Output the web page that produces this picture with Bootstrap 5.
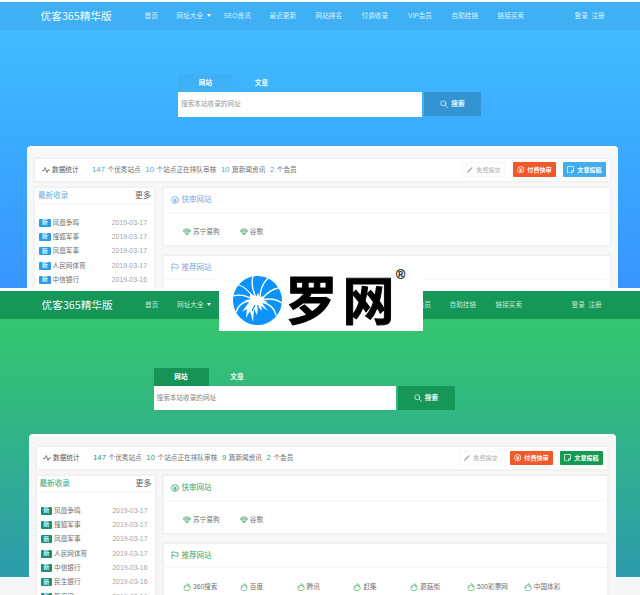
<!DOCTYPE html>
<html lang="zh-CN">
<head>
<meta charset="utf-8">
<meta name="viewport" content="width=device-width, initial-scale=1">
<title>优客365精华版</title>
<link href="https://cdn.jsdelivr.net/npm/bootstrap@5.3.0/dist/css/bootstrap.min.css" rel="stylesheet">
<style>
body{font-family:"Liberation Sans","Noto Sans CJK SC",sans-serif;font-size:6.65px;line-height:1.2;color:#707070;background:#fff;width:640px;height:595px;overflow:hidden}
svg{display:block;flex:none}
.ico{width:8px;height:8px;fill:none;stroke:currentColor;stroke-width:1.5;stroke-linecap:round;stroke-linejoin:round}
.site{overflow:hidden;display:flow-root}
.blue{--bar:#40b0f4;--tab:#3eb0f6;--go:#3494d1;--title:#74ace0;--tag:#2e9be2;--post:#42adec;--num:#52aadd;--panel:#f8f8f8;
 height:286px;margin-top:2px;background:linear-gradient(#42bcff 28px,#3aa9ff 150px,#3994ff)}
.green{--bar:#169657;--tab:#159455;--go:#169657;--title:#3aa572;--tag:#179077;--post:#159a54;--num:#2d9c75;--panel:#f8f6f7;
 height:304px;margin-top:3px;background:linear-gradient(#34c66e 28px,#31b487 140px,#2d9bad 286px,#f7f7f8 286px)}
.topbar{height:28px;background:var(--bar);color:#d5f0ff}
.green .topbar{color:#c4ead5}
.logo-name{font-family:"Noto Sans CJK SC",sans-serif;font-size:10.7px;color:#f2fbff;width:104px;white-space:nowrap;line-height:1}
.blue .logo-name{margin-left:40.5px}
.green .logo-name{margin-left:41.5px;width:103.5px}
.menu{display:grid;grid-template-columns:32px 47px 46px 46px 46px 46.5px 43.5px 46px 77px;white-space:nowrap}
.green .menu{grid-template-columns:32px 47px 46px 45px 46px 46px 42.5px 46px 76px}
.caret{border:2.8px solid transparent;border-top:3.2px solid #fff;border-bottom:0;margin-left:3.5px}
.finder{width:304px;font-weight:700;color:#fff}
.blue .finder{margin:44px 0 0 178px}
.green .finder{margin:48.500px 0 0 153.5px}
.tab-cell{width:55px;height:18px}
.tab-cell.on{background:var(--tab)}
.tab-cell+.tab-cell{width:57px}
.query{width:244px;height:24.5px;background:#fff;color:#999;font-weight:400;padding-left:3px}
.green .query{width:242px;color:#888}
.go{width:57px;height:24px;background:var(--go);margin-left:2px;color:#e6f6ff}
.go .ico{margin-right:3px}
.panel{background:var(--panel);border-radius:4px 4px 0 0;border-top:2px solid #fff}
.blue .panel{margin:29px 22px 0 27px;padding:10px 7px 0;height:180px}
.green .panel{margin:23.5px 24.5px 0 28.5px;padding:10.500px 7.5px 0 7px;height:180px}
.box{background:#fff;border:1px solid #f1f1f2;box-shadow:0 0 2px #e8e8ea}
.stats{height:24px;padding:0 4px 0 7px;white-space:nowrap}
.stats .head{color:#555;width:50px}
.green .stats{padding-left:6.5px}
.stats .head .ico{margin-right:2px}
.stats b{font-weight:400;font-size:7.8px;color:var(--num);margin-right:2.5px}
.stats .fact{margin-right:4.6px}
.act{width:43.5px;height:14.5px;border-radius:1px;font-size:6.1px;font-weight:700;color:#fff;gap:3px}
.act .ico{width:7.5px;height:7.5px}
.act-plain{border:1px solid #f7f7f7;color:#aaa;font-weight:400;margin-right:7.5px}
.act-pay{background:#f1592b;margin-right:6.5px}
.act-post{background:var(--post)}
.columns{margin-top:5.5px}
.green .columns{margin-top:5px}
.latest{width:121px;height:150px;flex:none;margin-right:8px}
.green .latest{width:120px;margin-right:7.5px}
.latest-head{height:17px;padding:0 3px;color:var(--title);font-size:7.6px;border-bottom:1px solid #f7f7f7}
.latest-head span+span{color:#666;font-size:8px}
.latest-list{padding:10.5px 7px 0 4px}
.latest-list>div{height:14.35px}
.tag{background:var(--tag);color:#d6f3ff;border-radius:1px;width:11.5px;height:8px;font-size:6px;font-weight:700;margin-right:2px}
.date{color:#a5a5a5;font-size:6.9px}
.group-box{height:58.5px;margin-bottom:9px}
.group-box+.group-box{height:80px}
.group-head{height:24.5px;padding-left:7px;color:var(--title);font-size:7.5px;gap:2.5px;border-bottom:1px solid #f6f6f6}
.links{display:grid;grid-template-columns:repeat(7,56.8px);height:38px;padding-left:19px;white-space:nowrap;align-items:center}
.links .ico{color:#57b37b;margin-right:2px}
.watermark{left:218.5px;top:267px;width:204px;height:64px;background:#fff;color:#000}
.watermark svg{width:204px;height:64px}
.watermark text{font-family:"Noto Sans CJK SC",sans-serif;font-weight:700;font-size:52px;stroke:#000;stroke-width:.9px;stroke-linejoin:round}
.watermark .reg{font-family:"Liberation Sans",sans-serif;font-size:12.5px;font-weight:400;stroke-width:.2px}
</style>
<script src="https://cdn.jsdelivr.net/npm/bootstrap@5.3.0/dist/js/bootstrap.bundle.min.js"></script>
</head>
<body class="position-relative">
<svg class="d-none">
 <symbol id="pulse" viewBox="0 0 16 16"><path d="M1 9h3l2.5-6 3.5 10 2-5h3"/></symbol>
 <symbol id="search" viewBox="0 0 16 16"><circle cx="6.5" cy="6.5" r="5"/><path d="M10.5 10.5l4.5 4.5"/></symbol>
 <symbol id="pencil" viewBox="0 0 16 16"><path d="M3 14l1-3 8-8 1.500 1.500-8 8z" fill="currentColor"/></symbol>
 <symbol id="yen" viewBox="0 0 16 16"><circle cx="8" cy="8" r="7"/><path d="M5 4l3 4 3-4M8 8v5M5.5 8.5h5M5.5 10.5h5"/></symbol>
 <symbol id="note" viewBox="0 0 16 16"><path d="M2 1h12v9l-4 5H2zM14 10h-4v5"/></symbol>
 <symbol id="flag" viewBox="0 0 16 16"><path d="M2 15V2h6l1 1.500h5v7H8.500l-1-1.500H2"/></symbol>
 <symbol id="gem" viewBox="0 0 16 16"><path d="M4 2h8l3 4-7 8-7-8zM1 6h14M5 6l3 8 3-8M5 6l3-4 3 4"/></symbol>
 <symbol id="thumb" viewBox="0 0 16 16"><path d="M4 6C1 8 1 14 5 15h6c4-1 4-7 2-9l-3 1V4M4 6l4-2 1-3 2 3M4 6v3M13 6l-1-2"/></symbol>
</svg>

<section class="site blue">
 <nav class="topbar d-flex align-items-center">
  <div class="logo-name">优客365精华版</div>
  <div class="menu"><span>首页</span><span class="d-flex align-items-center">网址大全<i class="caret"></i></span><span>SEO资讯</span><span>最近更新</span><span>网站排名</span><span>付费收录</span><span>VIP会员</span><span>自助挂链</span><span>链接买卖</span></div>
  <span class="text-nowrap">登录&nbsp; 注册</span>
 </nav>
 <div class="finder">
  <div class="d-flex"><div class="tab-cell on d-flex align-items-center justify-content-center">网站</div><div class="tab-cell d-flex align-items-center justify-content-center">文章</div></div>
  <div class="d-flex"><div class="query d-flex align-items-center">搜索本站收录的网址</div><div class="go d-flex align-items-center justify-content-center"><svg class="ico"><use href="#search"/></svg>搜索</div></div>
 </div>
 <main class="panel">
  <div class="box stats d-flex align-items-center">
   <div class="head d-flex align-items-center"><svg class="ico"><use href="#pulse"/></svg>数据统计</div>
   <span class="fact"><b>147</b>个优秀站点</span><span class="fact"><b>10</b>个站点正在排队审核</span><span class="fact"><b>10</b>篇新闻资讯</span><span class="fact"><b>2</b>个会员</span>
   <div class="act act-plain ms-auto d-flex align-items-center justify-content-center"><svg class="ico"><use href="#pencil"/></svg>免费提交</div>
   <div class="act act-pay d-flex align-items-center justify-content-center"><svg class="ico"><use href="#yen"/></svg>付费快审</div>
   <div class="act act-post d-flex align-items-center justify-content-center"><svg class="ico"><use href="#note"/></svg>文章投稿</div>
  </div>
  <div class="columns d-flex">
   <div class="box latest">
    <div class="latest-head d-flex align-items-center justify-content-between"><span>最新收录</span><span>更多</span></div>
    <div class="latest-list">
     <div class="d-flex align-items-center"><span class="tag d-flex align-items-center justify-content-center">新</span>凤凰争鸣<span class="date ms-auto">2019-03-17</span></div>
     <div class="d-flex align-items-center"><span class="tag d-flex align-items-center justify-content-center">新</span>搜狐军事<span class="date ms-auto">2019-03-17</span></div>
     <div class="d-flex align-items-center"><span class="tag d-flex align-items-center justify-content-center">新</span>凤凰军事<span class="date ms-auto">2019-03-17</span></div>
     <div class="d-flex align-items-center"><span class="tag d-flex align-items-center justify-content-center">新</span>人民网体育<span class="date ms-auto">2019-03-17</span></div>
     <div class="d-flex align-items-center"><span class="tag d-flex align-items-center justify-content-center">新</span>中信银行<span class="date ms-auto">2019-03-16</span></div>
    </div>
   </div>
   <div class="flex-grow-1">
    <div class="box group-box">
     <div class="group-head d-flex align-items-center"><svg class="ico"><use href="#yen"/></svg>快审网站</div>
     <div class="links"><span class="d-flex align-items-center"><svg class="ico"><use href="#gem"/></svg>苏宁易购</span><span class="d-flex align-items-center"><svg class="ico"><use href="#gem"/></svg>谷歌</span></div>
    </div>
    <div class="box group-box">
     <div class="group-head d-flex align-items-center"><svg class="ico"><use href="#flag"/></svg>推荐网站</div>
    </div>
   </div>
  </div>
 </main>
</section>

<section class="site green">
 <nav class="topbar d-flex align-items-center">
  <div class="logo-name">优客365精华版</div>
  <div class="menu"><span>首页</span><span class="d-flex align-items-center">网址大全<i class="caret"></i></span><span></span><span></span><span></span><span></span><span>VIP会员</span><span>自助挂链</span><span>链接买卖</span></div>
  <span class="text-nowrap">登录&nbsp; 注册</span>
 </nav>
 <div class="finder">
  <div class="d-flex"><div class="tab-cell on d-flex align-items-center justify-content-center">网站</div><div class="tab-cell d-flex align-items-center justify-content-center">文章</div></div>
  <div class="d-flex"><div class="query d-flex align-items-center">搜索本站收录的网址</div><div class="go d-flex align-items-center justify-content-center"><svg class="ico"><use href="#search"/></svg>搜索</div></div>
 </div>
 <main class="panel">
  <div class="box stats d-flex align-items-center">
   <div class="head d-flex align-items-center"><svg class="ico"><use href="#pulse"/></svg>数据统计</div>
   <span class="fact"><b>147</b>个优秀站点</span><span class="fact"><b>10</b>个站点正在排队审核</span><span class="fact"><b>9</b>篇新闻资讯</span><span class="fact"><b>2</b>个会员</span>
   <div class="act act-plain ms-auto d-flex align-items-center justify-content-center"><svg class="ico"><use href="#pencil"/></svg>免费提交</div>
   <div class="act act-pay d-flex align-items-center justify-content-center"><svg class="ico"><use href="#yen"/></svg>付费快审</div>
   <div class="act act-post d-flex align-items-center justify-content-center"><svg class="ico"><use href="#note"/></svg>文章投稿</div>
  </div>
  <div class="columns d-flex">
   <div class="box latest">
    <div class="latest-head d-flex align-items-center justify-content-between"><span>最新收录</span><span>更多</span></div>
    <div class="latest-list">
     <div class="d-flex align-items-center"><span class="tag d-flex align-items-center justify-content-center">新</span>凤凰争鸣<span class="date ms-auto">2019-03-17</span></div>
     <div class="d-flex align-items-center"><span class="tag d-flex align-items-center justify-content-center">新</span>搜狐军事<span class="date ms-auto">2019-03-17</span></div>
     <div class="d-flex align-items-center"><span class="tag d-flex align-items-center justify-content-center">新</span>凤凰军事<span class="date ms-auto">2019-03-17</span></div>
     <div class="d-flex align-items-center"><span class="tag d-flex align-items-center justify-content-center">新</span>人民网体育<span class="date ms-auto">2019-03-17</span></div>
     <div class="d-flex align-items-center"><span class="tag d-flex align-items-center justify-content-center">新</span>中信银行<span class="date ms-auto">2019-03-16</span></div>
     <div class="d-flex align-items-center"><span class="tag d-flex align-items-center justify-content-center">新</span>民生银行<span class="date ms-auto">2019-03-16</span></div>
     <div class="d-flex align-items-center"><span class="tag d-flex align-items-center justify-content-center">新</span>新浪网<span class="date ms-auto">2019-03-16</span></div>
    </div>
   </div>
   <div class="flex-grow-1">
    <div class="box group-box">
     <div class="group-head d-flex align-items-center"><svg class="ico"><use href="#yen"/></svg>快审网站</div>
     <div class="links"><span class="d-flex align-items-center"><svg class="ico"><use href="#gem"/></svg>苏宁易购</span><span class="d-flex align-items-center"><svg class="ico"><use href="#gem"/></svg>谷歌</span></div>
    </div>
    <div class="box group-box">
     <div class="group-head d-flex align-items-center"><svg class="ico"><use href="#flag"/></svg>推荐网站</div>
     <div class="links"><span class="d-flex align-items-center"><svg class="ico"><use href="#thumb"/></svg>360搜索</span><span class="d-flex align-items-center"><svg class="ico"><use href="#thumb"/></svg>百度</span><span class="d-flex align-items-center"><svg class="ico"><use href="#thumb"/></svg>腾讯</span><span class="d-flex align-items-center"><svg class="ico"><use href="#thumb"/></svg>赶集</span><span class="d-flex align-items-center"><svg class="ico"><use href="#thumb"/></svg>蘑菇街</span><span class="d-flex align-items-center"><svg class="ico"><use href="#thumb"/></svg>500彩票网</span><span class="d-flex align-items-center"><svg class="ico"><use href="#thumb"/></svg>中国体彩</span></div>
    </div>
   </div>
  </div>
 </main>
</section>

<div class="watermark position-absolute">
 <svg viewBox="0 0 204 64">
  <circle cx="38.500" cy="33.500" r="24.500" fill="#0c92fb"/>
  <g fill="none" stroke="#fff" stroke-width="1.300" stroke-linecap="round">
   <path d="M38 32Q31 20 34 9M41 31Q41 19 49 11M43 32Q50 23 59 21M43 33Q54 30 63 36M42 35Q54 37 57 48M36 32Q27 20 20 18M35 33Q24 26 14 29M35 34Q21 33 17 45"/>
  </g>
  <path d="M31 26l6 4 2-4 2 4 5-1-2 4 5 2-6 1 6 8-7-5 1 5-4-4-1 8-3-6-1 13-3-11-4 7 1-9-5 3 7-10-5-1 6-2z" fill="#fff"/>
  <path d="M36 38l-3 6M39 38l0 3" stroke="#0c92fb" stroke-width="1.300"/>
  <text x="66.500" y="53">罗</text><text x="123.500" y="53">网</text>
  <text class="reg" x="177" y="12">®</text>
 </svg>
</div>
</body>
</html>
